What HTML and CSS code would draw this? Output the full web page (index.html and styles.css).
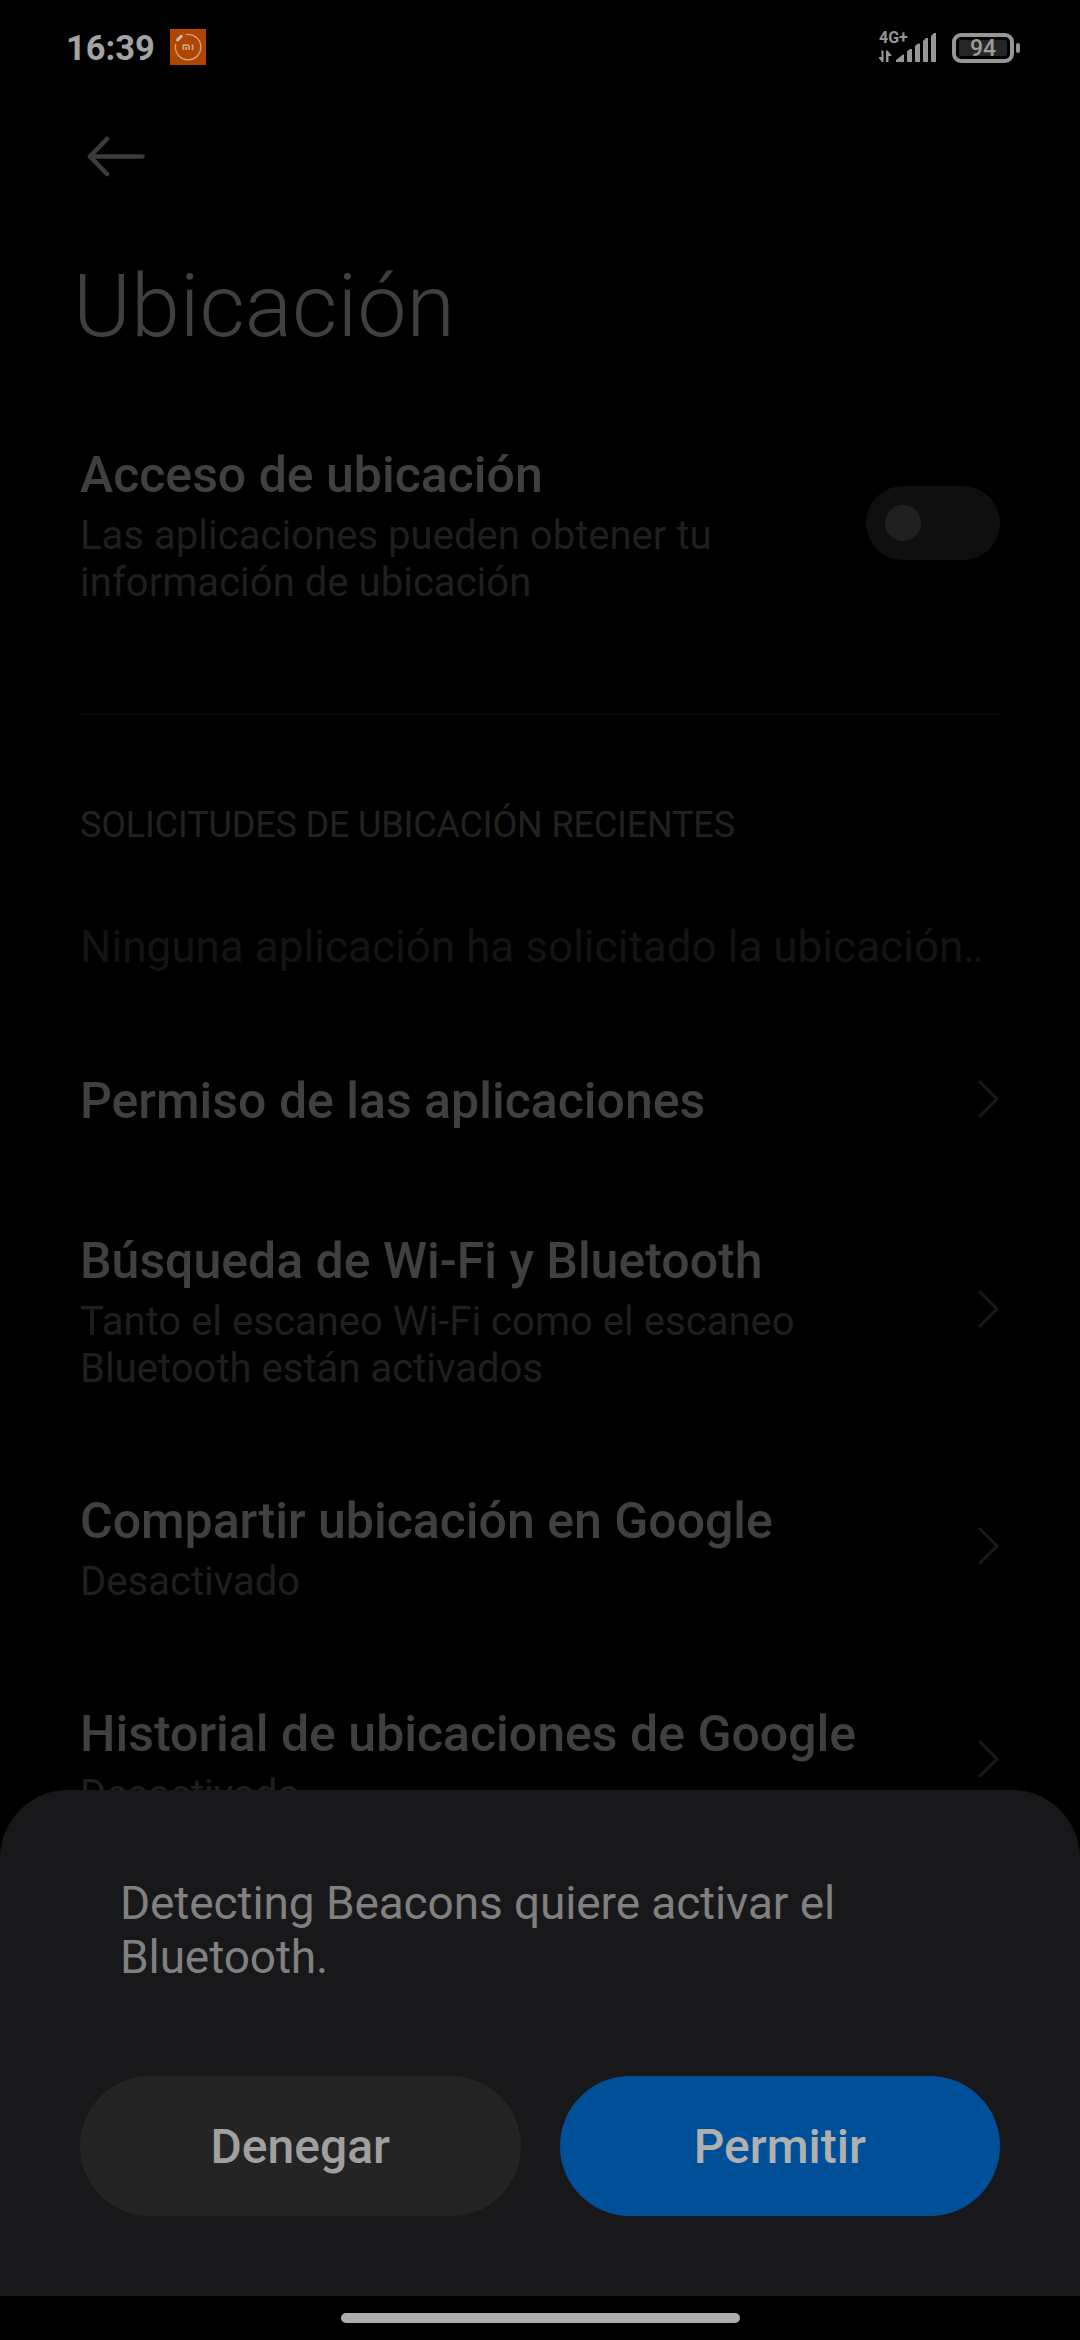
FILE: index.html
```html
<!DOCTYPE html>
<html lang="es">
<head>
<meta charset="utf-8">
<title>Ubicación</title>
<link rel="stylesheet" href="styles.css">
</head>
<body>
<div class="screen">
  <header class="status">
    <span class="clock">16:39</span>
    <svg class="mi" width="36" height="36" viewBox="0 0 36 36">
      <rect width="36" height="36" fill="#b04600"/>
      <path d="M16 5.6A12.7 12.7 0 1 1 5.8 15" fill="none" stroke="#c9a893" stroke-width="1.3"/>
      <path d="M7.5 11L11.3 7.3" stroke="#c9bbb2" stroke-width="3" stroke-linecap="round"/>
      <path d="M13.4 21V16.2H17.5Q19 16.2 19 17.8V21M16.2 18V21M22.6 15.5V21" fill="none" stroke="#c9a893" stroke-width="1.7"/>
    </svg>
    <div class="indicators">
      <div class="network">
        <span class="network-type">4G+</span>
        <svg class="signal" width="58" height="30" viewBox="0 0 58 30" fill="#969696">
          <path d="M4.500 17.500V29H3L0 25.200V24H2.500V17.500ZM7 29V17.500H8.500L12.500 22.300V23H9.500V29Z"/>
          <path d="M17 29V27L24 21.500H25V29ZM28 29V18.500L31 16H33V29ZM36 29V13L39 10.500H41V29ZM44 29V8L47 5H49V29ZM52 29V3L55 0H57V29Z"/>
        </svg>
      </div>
      <div class="battery"><span class="level">94</span></div>
      <i class="nub"></i>
    </div>
  </header>

  <svg class="back" width="60" height="42" viewBox="0 0 60 42" fill="none" stroke="#3c3c3c" stroke-width="4.600" stroke-linecap="round" stroke-linejoin="round">
    <path d="M21 4L4 21.500L21 39M4 21.500H56.500"/>
  </svg>
  <h1 class="heading">Ubicación</h1>

  <main class="list">
    <div class="row">
      <div class="text"><h2>Acceso de ubicación</h2><p>Las aplicaciones pueden obtener tu<br>información de ubicación</p></div>
      <div class="toggle"><i class="knob"></i></div>
    </div>
    <hr class="divider">
    <h3 class="section">SOLICITUDES DE UBICACIÓN RECIENTES</h3>
    <p class="empty">Ninguna aplicación ha solicitado la ubicación<span class="dots">..</span></p>
    <div class="row">
      <div class="text"><h2>Permiso de las aplicaciones</h2></div>
      <svg class="chevron" viewBox="0 0 22 38"><path d="M2 2L19 19L2 36"/></svg>
    </div>
    <div class="row">
      <div class="text"><h2>Búsqueda de Wi-Fi y Bluetooth</h2><p>Tanto el escaneo Wi-Fi como el escaneo<br>Bluetooth están activados</p></div>
      <svg class="chevron" viewBox="0 0 22 38"><path d="M2 2L19 19L2 36"/></svg>
    </div>
    <div class="row">
      <div class="text"><h2>Compartir ubicación en Google</h2><p>Desactivado</p></div>
      <svg class="chevron" viewBox="0 0 22 38"><path d="M2 2L19 19L2 36"/></svg>
    </div>
    <div class="row">
      <div class="text"><h2>Historial de ubicaciones de Google</h2><p>Desactivado</p></div>
      <svg class="chevron" viewBox="0 0 22 38"><path d="M2 2L19 19L2 36"/></svg>
    </div>
  </main>

  <div class="overlay">
    <section class="sheet">
      <p class="message">Detecting Beacons quiere activar el<br>Bluetooth.</p>
      <div class="actions">
        <button class="button">Denegar</button>
        <button class="button primary">Permitir</button>
      </div>
    </section>
    <div class="navbar"><i class="handle"></i></div>
  </div>
</div>
</body>
</html>
```
FILE: styles.css
```css
* { box-sizing: border-box; margin: 0; padding: 0; }
body { background: #000; font-family: Roboto, "Liberation Sans", sans-serif; }
.screen { position: relative; width: 1080px; height: 2340px; overflow: hidden; background: #000; }

.status { display: flex; height: 96px; padding: 28px 60px 0 66px; align-items: flex-start; }
.clock { width: 104px; font-size: 34.5px; line-height: 40px; font-weight: 700; color: #a3a3a3; white-space: nowrap; }
.mi { display: block; margin-top: 1px; }
.indicators { display: flex; margin-left: auto; align-items: flex-start; }
.network { display: grid; width: 73px; height: 40px; }
.network-type { grid-area: 1 / 1; font-size: 16px; line-height: 20px; font-weight: 700; color: #969696; }
.signal { grid-area: 1 / 1; margin-top: 5px; }
.battery { display: flex; width: 62px; height: 30px; margin-top: 5px; padding: 3px; border: 4px solid #969696; border-radius: 9px; }
.level { flex: 1; background: #262626; border-radius: 2px; color: #9c9c9c; font-size: 23px; line-height: 18px; font-weight: 500; text-align: center; }
.nub { width: 4px; height: 10px; margin: 15px 0 0 2px; border-radius: 2px; background: #969696; }

.back { display: block; margin: 39px 0 0 86px; }
.heading { margin: 77px 0 0 73px; font-size: 88px; line-height: 104px; font-weight: 300; color: #404040; white-space: nowrap; }

.list { padding: 88px 80px 0; }
.row { display: flex; justify-content: space-between; align-items: center; margin-bottom: 100px; white-space: nowrap; }
h2 { font-size: 50px; line-height: 59px; font-weight: 500; color: #404040; }
.text p { margin-top: 7px; font-size: 40px; line-height: 47px; letter-spacing: 0.03px; color: #1f1f1f; }
.toggle { display: flex; width: 134px; height: 74px; margin-bottom: 6px; padding-left: 19px; align-items: center; border-radius: 37px; background: #0f0f0f; }
.knob { width: 36px; height: 36px; border-radius: 50%; background: #202020; }
.divider { height: 2px; margin-top: 107px; border: 0; background: #070707; }
.row:first-child { margin-bottom: 0; }
.section { margin-top: 89px; font-size: 36px; line-height: 42px; font-weight: 400; letter-spacing: -0.15px; color: #222; white-space: nowrap; }
.empty { margin: 75px 0 99px; font-size: 44px; line-height: 52px; letter-spacing: 0.03px; color: #141414; white-space: nowrap; }
.dots { letter-spacing: -2.4px; }
.empty + .row { margin-bottom: 101px; }
.chevron { width: 22px; height: 38px; margin-bottom: 6px; fill: none; stroke: #191919; stroke-width: 3; stroke-linecap: round; stroke-linejoin: round; }

.overlay { position: absolute; left: 0; right: 0; bottom: 0; }
.sheet { height: 506px; padding: 86px 80px 80px; display: flex; flex-direction: column; justify-content: space-between; border-radius: 68px 68px 0 0; background: #18181a; }
.message { padding-left: 40px; font-size: 46px; line-height: 54px; letter-spacing: -0.11px; color: #808080; white-space: nowrap; }
.actions { display: grid; grid-template-columns: 1fr 1fr; gap: 39px; }
.button { height: 140px; padding-top: 2px; border: 0; border-radius: 70px; background: #242424; color: #a0a0a0; font: 500 48px/56px Roboto, "Liberation Sans", sans-serif; }
.primary { background: #004f99; color: #b0b0b0; }
.navbar { display: flex; height: 44px; padding-top: 17px; justify-content: center; background: #000; }
.handle { width: 399px; height: 10px; border-radius: 5px; background: #adadad; }
```
